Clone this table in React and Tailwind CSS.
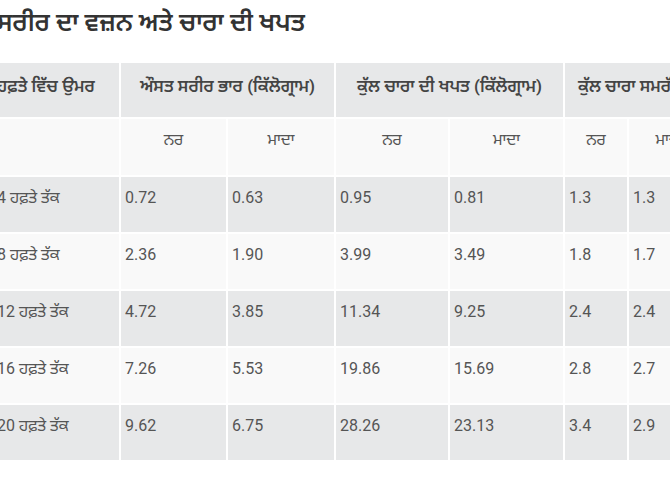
import React from "react";

const rows = [
  ["4 ਹਫ਼ਤੇ ਤੱਕ", "0.72", "0.63", "0.95", "0.81", "1.3", "1.3"],
  ["8 ਹਫ਼ਤੇ ਤੱਕ", "2.36", "1.90", "3.99", "3.49", "1.8", "1.7"],
  ["12 ਹਫ਼ਤੇ ਤੱਕ", "4.72", "3.85", "11.34", "9.25", "2.4", "2.4"],
  ["16 ਹਫ਼ਤੇ ਤੱਕ", "7.26", "5.53", "19.86", "15.69", "2.8", "2.7"],
  ["20 ਹਫ਼ਤੇ ਤੱਕ", "9.62", "6.75", "28.26", "23.13", "3.4", "2.9"],
];

export default function App() {
  return (
    <div
      className="w-[670px] h-[494px] overflow-hidden bg-white text-[#555]"
      style={{ fontFamily: 'Roboto, "Noto Sans Gurmukhi", "Noto Sans", sans-serif' }}
    >
      <div className="-ml-[7px] w-[900px]">
        <h2 className="pl-[4px] pt-[6px] h-[63px] text-[25px] font-semibold leading-[34px] text-[#333]">
          ਸਰੀਰ ਦਾ ਵਜ਼ਨ ਅਤੇ ਚਾਰਾ ਦੀ ਖਪਤ
        </h2>
        <div className="grid grid-cols-[126px_105px_106px_112px_113px_62px_80px] grid-rows-[54px_56px_55px_55px_55px_55px_55px] gap-[2px] text-[16px] leading-[24px]">
          <div className="bg-[#e7e8e9] pl-[4px] pt-[11px] text-[17px] font-semibold whitespace-nowrap text-[#444]">ਹਫ਼ਤੇ ਵਿੱਚ ਉਮਰ</div>
          <div className="col-span-2 bg-[#e7e8e9] pt-[11px] text-center text-[17px] font-semibold whitespace-nowrap text-[#444]">ਔਸਤ ਸਰੀਰ ਭਾਰ (ਕਿੱਲੋਗ੍ਰਾਮ)</div>
          <div className="col-span-2 bg-[#e7e8e9] pt-[11px] text-center text-[17px] font-semibold whitespace-nowrap text-[#444]">ਕੁੱਲ ਚਾਰਾ ਦੀ ਖਪਤ (ਕਿੱਲੋਗ੍ਰਾਮ)</div>
          <div className="col-span-2 bg-[#e7e8e9] pt-[11px] pl-[13px] text-[17px] font-semibold whitespace-nowrap text-[#444]">ਕੁੱਲ ਚਾਰਾ ਸਮਰੱਥਾ</div>

          <div className="bg-[#f9f9f9]"></div>
          {["ਨਰ", "ਮਾਦਾ", "ਨਰ", "ਮਾਦਾ", "ਨਰ", "ਮਾਦਾ"].map((t, i) => (
            <div key={i} className="bg-[#f9f9f9] pt-[9px] text-center">
              {t}
            </div>
          ))}

          {rows.map((r, ri) =>
            r.map((c, ci) => (
              <div
                key={ri + "-" + ci}
                className={
                  (ri % 2 === 0 ? "bg-[#e7e8e9]" : "bg-[#f9f9f9]") +
                  " pl-[4px] pt-[9px] whitespace-nowrap"
                }
              >
                {c}
              </div>
            ))
          )}
        </div>
      </div>
    </div>
  );
}
